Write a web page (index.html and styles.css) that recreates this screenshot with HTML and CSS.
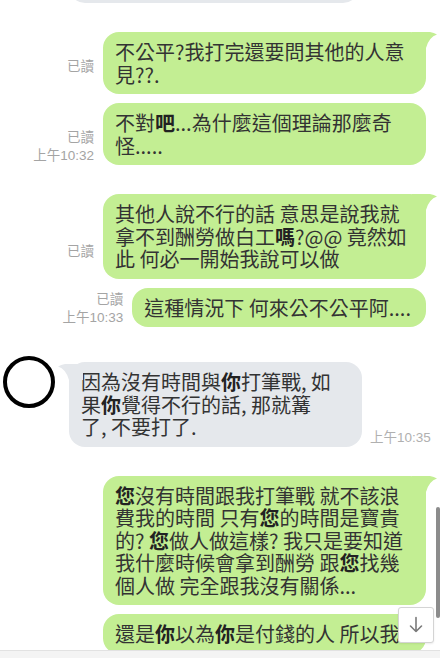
FILE: index.html
```html
<!DOCTYPE html>
<html lang="zh-Hant">
<head>
<meta charset="utf-8">
<title>Chat</title>
<link rel="stylesheet" href="styles.css">
</head>
<body>
<div class="screen">
  <div class="chat">
    <div class="row in top-cut">
      <div class="avatar-space"></div>
      <div class="bubble partial"></div>
      <div class="meta"><span>上午10:31</span></div>
    </div>

    <div class="row out gap-l">
      <div class="meta"><span>已讀</span><span></span></div>
      <div class="bubble">
        <svg class="tail" viewBox="0 0 25 16" width="25" height="16"><path d="M0 0 L18 0 Q22 0.5 25 2.5 Q17 5 14 16 L0 16 Z"/></svg>
        不公平?我打完還要問其他的人意見??.
      </div>
    </div>

    <div class="row out gap-s">
      <div class="meta"><span>已讀</span><span>上午10:32</span></div>
      <div class="bubble">不對<b>吧</b>...為什麼這個理論那麼奇怪.....</div>
    </div>

    <div class="row out gap-l">
      <div class="meta"><span>已讀</span><span></span></div>
      <div class="bubble">
        <svg class="tail" viewBox="0 0 25 16" width="25" height="16"><path d="M0 0 L18 0 Q22 0.5 25 2.5 Q17 5 14 16 L0 16 Z"/></svg>
        其他人說不行的話 意思是說我就拿不到酬勞做白工<b>嗎</b>?@@ 竟然如此 何必一開始我說可以做
      </div>
    </div>

    <div class="row out gap-s">
      <div class="meta"><span>已讀</span><span>上午10:33</span></div>
      <div class="bubble">這種情況下 何來公不公平阿....</div>
    </div>

    <div class="row in gap-l">
      <div class="avatar"></div>
      <div class="bubble">
        <svg class="tail" viewBox="0 0 25 16" width="25" height="16"><path d="M25 0 L7 0 Q3 0.5 0 2.5 Q8 5 11 16 L25 16 Z"/></svg>
        因為沒有時間與<b>你</b>打筆戰, 如果<b>你</b>覺得不行的話, 那就篝了, 不要打了.
      </div>
      <div class="meta"><span>上午10:35</span></div>
    </div>

    <div class="row out gap-l">
      <div class="bubble">
        <svg class="tail" viewBox="0 0 25 16" width="25" height="16"><path d="M0 0 L18 0 Q22 0.5 25 2.5 Q17 5 14 16 L0 16 Z"/></svg>
        <b>您</b>沒有時間跟我打筆戰 就不該浪費我的時間 只有<b>您</b>的時間是寶貴的? <b>您</b>做人做這樣? 我只是要知道我什麼時候會拿到酬勞 跟<b>您</b>找幾個人做 完全跟我沒有關係...
      </div>
    </div>

    <div class="row out gap-s">
      <div class="bubble wide">還是<b>你</b>以為<b>你</b>是付錢的人 所以我</div>
    </div>
  </div>
  <div class="bottom-bar"></div>

  <div class="scroll-thumb"></div>
  <div class="scroll-down">
    <svg viewBox="0 0 36 36" width="36" height="36"><path d="M18 10.5 V24.5 M12.5 19 L18 24.5 L23.5 19" fill="none" stroke="#7a7a7a" stroke-width="1.6" stroke-linecap="round" stroke-linejoin="round"/></svg>
  </div>
</div>
</body>
</html>
```

FILE: styles.css
```css
* { box-sizing: border-box; }
html, body { margin: 0; padding: 0; }
body {
  width: 440px;
  height: 658px;
  overflow: hidden;
  background: #ffffff;
  font-family: "Noto Sans CJK TC", "Noto Sans", sans-serif;
  color: #333333;
}
.screen {
  position: relative;
  width: 440px;
  height: 658px;
  overflow: hidden;
}
.chat {
  height: 650px;
  overflow: hidden;
}
.row {
  display: flex;
  align-items: flex-end;
}
.row.out {
  justify-content: flex-end;
  padding-right: 14px;
}
.row.in {
  align-items: flex-start;
  padding-left: 3px;
}
.gap-s { margin-top: 9px; }
.gap-l { margin-top: 29px; }

.bubble {
  position: relative;
  font-size: 20px;
  line-height: 22.5px;
  padding: 9px 15px 8px 12px;
  border-radius: 16px;
}
.bubble b { font-weight: 700; color: #222; }
.out .bubble {
  background: #c3ee93;
  max-width: 323px;
}
.out .bubble.wide { width: 323px; }
.in .bubble {
  background: #e5e8ec;
  max-width: 293px;
  padding-right: 29px;
  margin-left: 14px;
  margin-top: 6px;
}
.tail {
  position: absolute;
  top: 0;
  display: block;
}
.out .tail { right: -11px; fill: #c3ee93; }
.in .tail { left: -11px; top: 2px; fill: #e5e8ec; }

.top-cut { margin-top: -37px; }
.avatar-space { width: 52px; flex-shrink: 0; }
.in .bubble.partial {
  width: 290px;
  height: 40px;
  margin-top: 0;
}
.top-cut .meta { align-self: flex-end; }

.avatar {
  width: 52px;
  height: 52px;
  flex-shrink: 0;
  border: 4.5px solid #000;
  border-radius: 50%;
  background: #fff;
}

.meta {
  flex-shrink: 0;
  font-family: "Liberation Sans", "Noto Sans CJK TC", sans-serif;
  font-size: 13.5px;
  line-height: 18px;
  color: #a4a4a4;
  text-align: right;
  white-space: nowrap;
}
.meta span { display: block; height: 18px; }
.out .meta { margin-right: 9px; }
.in .meta { margin-left: 8px; align-self: flex-end; color: #b0b0b0; }

.bottom-bar {
  height: 8px;
  border-top: 1px solid #e2e2e2;
  background: #f4f4f4;
}

.scroll-thumb {
  position: absolute;
  right: 0;
  top: 507px;
  width: 4px;
  height: 111px;
  border-radius: 2px;
  background: #8c8c8c;
}
.scroll-down {
  position: absolute;
  left: 398px;
  top: 607px;
  width: 36px;
  height: 36px;
  background: #ffffff;
  border: 1px solid #d4d4d4;
  border-radius: 3px;
  box-shadow: 0 1px 2px rgba(0,0,0,0.08);
}
.scroll-down svg { display: block; margin: -1px; }
```
